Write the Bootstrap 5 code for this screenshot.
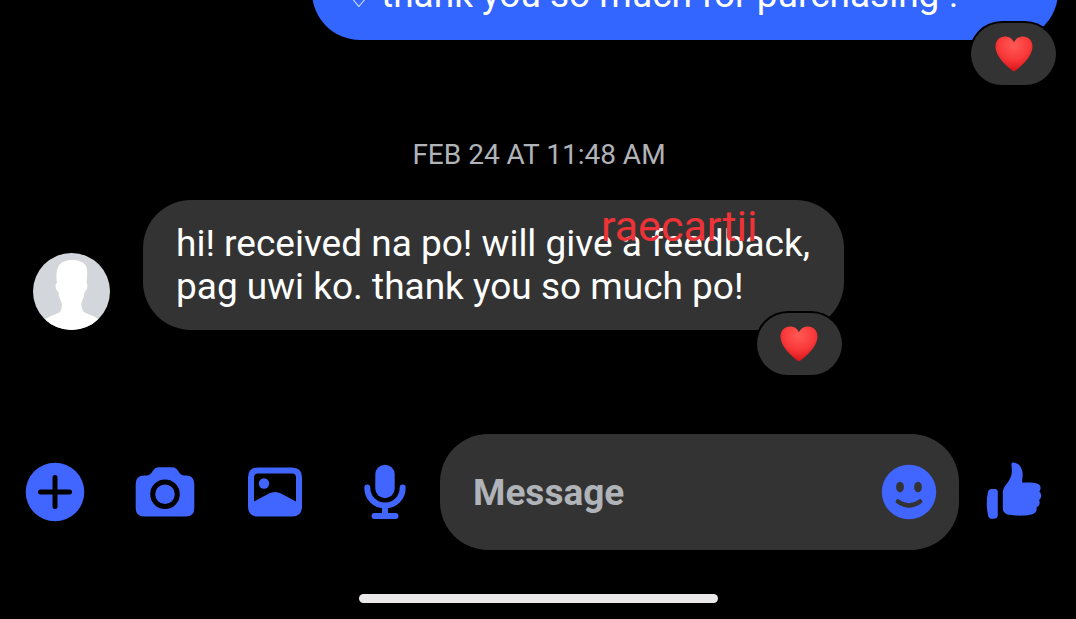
<!DOCTYPE html>
<html lang="en">
<head>
<meta charset="utf-8">
<meta name="viewport" content="width=device-width, initial-scale=1">
<title>Chat</title>
<link href="https://cdn.jsdelivr.net/npm/bootstrap@5.3.0/dist/css/bootstrap.min.css" rel="stylesheet">
<style>
  body { background: #000; color: #fff; font-family: Roboto, "Noto Sans", sans-serif; }
  .chat { height: 100vh; }
  .bubble { background: #333; border-radius: 48px; padding: 22px 34px 22px 33px; font-size: 37px; line-height: 43px; }
  .bubble-sent { background: #3366ff; width: 746px; max-width: 75%; min-height: 130px; margin-right: 18px; padding-bottom: 24px; }
  .outline-heart { font-family: "DejaVu Sans", sans-serif; font-size: 30px; font-weight: 700; line-height: 1; }
  .reaction { background: #333; border-radius: 32px; width: 85px; height: 62px; right: 2px; bottom: -45px; box-shadow: 0 0 0 2px #000; }
  .reaction svg { width: 38px; height: 36px; }
  .stamp { color: #b0b3b8; font-size: 28px; line-height: 32px; margin: 99px 0 29px; padding-left: 2px; }
  .avatar { width: 77px; height: 77px; margin: 0 33px; }
  .watermark { color: #ed3338; font-size: 43px; line-height: 50px; left: 458px; top: 1px; }
  .composer { margin: 104px 0 44px; }
  .tool { width: 110px; height: 110px; flex-shrink: 0; }
  .tool svg, .emoji svg { width: 64px; height: 64px; fill: #4166ff; }
  .field { background: #333; border-radius: 48px; height: 116px; min-width: 0; padding-left: 33px; padding-right: 18px; }
  .field input { color: #fff; font-size: 37px; font-weight: 700; outline: 0; min-width: 0; padding: 2px 0 0; }
  .field input::placeholder { color: #b0b3b8; opacity: 1; }
  .like { width: 117px; padding-right: 8px; }
  .homebar { background: #ebe9e9; width: 359px; height: 9px; margin-bottom: 16px; }
</style>
</head>
<body>
<svg class="position-absolute" width="0" height="0" aria-hidden="true">
  <defs>
    <radialGradient id="heartFill" cx=".5" cy=".25" r=".75">
      <stop offset="0" stop-color="#ff5a55"/><stop offset=".55" stop-color="#f9393a"/><stop offset="1" stop-color="#d81218"/>
    </radialGradient>
  </defs>
</svg>
<main class="chat d-flex flex-column justify-content-end overflow-hidden">
  <div class="bubble bubble-sent position-relative align-self-end flex-shrink-0 d-flex align-items-end">
    <span><span class="outline-heart">♡</span> thank you so much for purchasing !</span>
    <span class="reaction position-absolute d-flex align-items-center justify-content-center" role="img" aria-label="Heart reaction">
      <svg viewBox="0 0 38 36"><path fill="url(#heartFill)" d="M19 35.500C14 32 1 22 .5 11C.3 4 5 .5 10 .5C14 .5 17.500 2.500 19 6.500C20.500 2.500 24 .5 28 .5C33 .5 37.700 4 37.500 11C37 22 24 32 19 35.500Z"/></svg>
    </span>
  </div>
  <div class="stamp text-center">FEB 24 AT 11:48 AM</div>
  <div class="d-flex align-items-end">
    <svg class="avatar flex-shrink-0" viewBox="0 0 77 77" role="img" aria-label="Profile picture">
      <defs><clipPath id="round"><circle cx="38.500" cy="38.500" r="38.500"/></clipPath></defs>
      <g clip-path="url(#round)"><path fill="#d3d7dc" d="M0 0H77V77H0Z"/>
      <path fill="#fff" d="M24 30C22 18 25 9 33 8C38 6 50 7 53 13C55 18 54 24 53.500 30C55.500 31 54 38 51.500 39C51 44 49.500 47 48.500 49C48 53 49 57 51 59C55 62 61 62 66 67L70 77H7L12 67C17 62 23 62 27 59C29 56 29 53 28.500 49C26.500 46 26 43 25.500 39C23 38 21 31 24 30Z"/></g>
    </svg>
    <div class="bubble position-relative">
      hi! received na po! will give a feedback,<br>pag uwi ko. thank you so much po!
      <span class="watermark position-absolute">raecartii</span>
      <span class="reaction position-absolute d-flex align-items-center justify-content-center" role="img" aria-label="Heart reaction">
        <svg viewBox="0 0 38 36"><path fill="url(#heartFill)" d="M19 35.500C14 32 1 22 .5 11C.3 4 5 .5 10 .5C14 .5 17.500 2.500 19 6.500C20.500 2.500 24 .5 28 .5C33 .5 37.700 4 37.500 11C37 22 24 32 19 35.500Z"/></svg>
      </span>
    </div>
  </div>
  <form class="composer d-flex align-items-center">
    <button type="button" class="tool btn p-0 border-0" aria-label="More">
      <svg viewBox="0 0 64 64"><circle cx="32" cy="32" r="29.300"/><path d="M32 17.500V46.500M17.500 32H46.500" stroke="#000" stroke-width="5" stroke-linecap="round"/></svg>
    </button>
    <button type="button" class="tool btn p-0 border-0" aria-label="Camera">
      <svg viewBox="0 0 64 64"><path d="M11 15.500H14C20 15 19 7.300 26 7.300H39C46 7.300 45 15 51 15.500H53Q61.300 15.500 61.300 24V48Q61.300 56.500 53 56.500H11Q2.700 56.500 2.700 48V24Q2.700 15.500 11 15.500Z"/><circle cx="32" cy="34.300" r="12.300" stroke="#000" stroke-width="5"/></svg>
    </button>
    <button type="button" class="tool btn p-0 border-0" aria-label="Gallery">
      <svg viewBox="0 0 64 64"><path fill-rule="evenodd" d="M15 7.500H49Q59 7.500 59 17.500V46.500Q59 56.500 49 56.500H15Q5 56.500 5 46.500V17.500Q5 7.500 15 7.500ZM15 13.500Q11 13.500 11 17.500V41.500L26 33.500Q32 30.500 38 33.500L53 41.500V17.500Q53 13.500 49 13.500Z"/><circle cx="21" cy="23.500" r="5.200"/></svg>
    </button>
    <button type="button" class="tool btn p-0 border-0" aria-label="Voice message">
      <svg viewBox="0 0 64 64"><rect x="22.300" y="4.700" width="19.400" height="33.500" rx="9.700"/><path d="M14.300 27.500C14.300 38 22 45.500 32 45.500S49.700 38 49.700 27.500M32 46V55M21.500 56H42.500" fill="none" stroke="#4166ff" stroke-width="6" stroke-linecap="round"/></svg>
    </button>
    <div class="field d-flex align-items-center flex-grow-1">
      <input type="text" class="bg-transparent border-0 flex-grow-1" placeholder="Message" aria-label="Message">
      <button type="button" class="emoji btn p-0 border-0 flex-shrink-0" aria-label="Emoji">
        <svg viewBox="0 0 64 64"><circle cx="32" cy="32" r="27.200"/><g fill="#333"><ellipse cx="23" cy="27" rx="3.900" ry="5.200"/><ellipse cx="41" cy="27" rx="3.900" ry="5.200"/></g><path d="M21 41.500Q32 49.500 43 41.500" fill="none" stroke="#333" stroke-width="4.500" stroke-linecap="round"/></svg>
      </button>
    </div>
    <button type="button" class="tool like btn py-0 ps-0 border-0" aria-label="Like">
      <svg viewBox="0 0 64 64"><path d="M9.500 29H13Q15.800 29 15.800 32V55Q15.800 58.700 12 58.700H9.500Q6.500 58.700 6 55Q3.500 43 6 32Q6.600 29 9.500 29Z"/><path d="M29.500 5C29.200 3 30.500 2.300 32.500 2.700C38 3.500 41.500 10 40.500 17C40.200 20 40 21.500 40.500 22.800C46 22.300 51 22.500 55 23.500C59 24.500 59.500 29 57.300 31.500C60 34 59.800 38 57 40C58.500 43 57.500 46 54.500 47.500C55.500 51 53 54 48 54.800C42 56 34 56 27 54.800C23 54 20.800 52 20.800 48V33C20.800 27 24 25.500 27 20.500C30.500 14.500 30 11 29.500 5Z"/></svg>
    </button>
  </form>
  <div class="homebar rounded-pill mx-auto flex-shrink-0"></div>
</main>
<script src="https://cdn.jsdelivr.net/npm/bootstrap@5.3.0/dist/js/bootstrap.bundle.min.js"></script>
</body>
</html>
